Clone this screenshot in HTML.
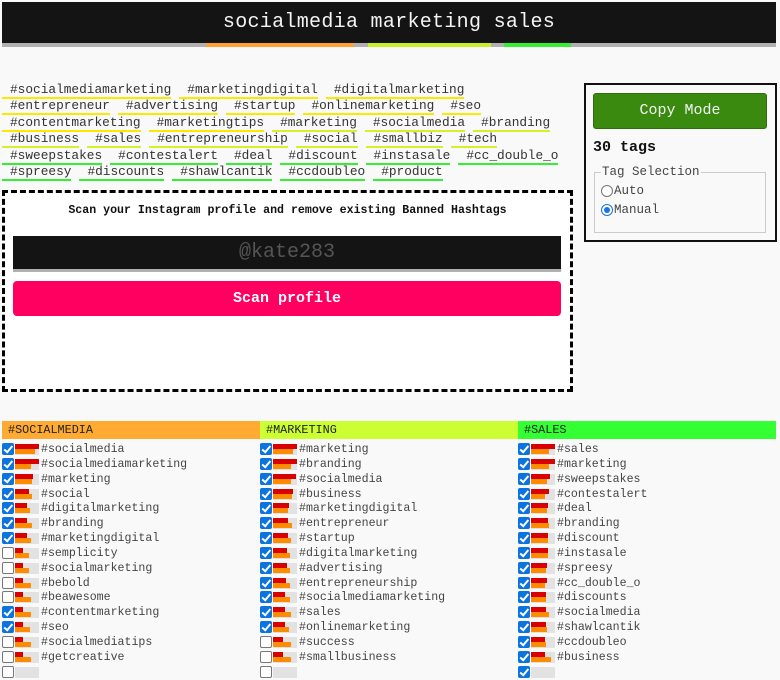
<!DOCTYPE html>
<html><head><meta charset="utf-8">
<style>
*{box-sizing:border-box;margin:0;padding:0}
body{width:780px;height:670px;overflow:hidden;background:#f9f9f9;font-family:"Liberation Mono",monospace;position:relative;color:#222}
.hdr{position:absolute;left:2px;top:2px;width:774px;height:45px;background:#141414;border-bottom:4px solid #b0b0b0}
.hdr .t{position:absolute;left:0;right:0;top:9px;text-align:center;color:#f4f4f4;font-size:20px;letter-spacing:0.3px}
.seg{position:absolute;top:41px;height:4px}
.tags{position:absolute;left:2px;top:82px;font-size:12.8px;color:#333}
.row{white-space:nowrap;height:16.4px}
.tg{display:inline-block;padding-left:8px;margin-right:8px;border-bottom:2px solid #ffe800;line-height:15px}
.y{border-color:#ffe800}.l{border-color:#d6f02a}.g{border-color:#33f033}
.scan{position:absolute;left:2px;top:190px;width:571px;height:202px;background:#fff;border:3px dashed #000}
.scan .h{position:absolute;top:11px;left:0;right:0;text-align:center;font-weight:bold;font-size:11.6px;color:#111}
.inp{position:absolute;left:8px;top:43px;width:548px;height:36px;background:#141414;border-bottom:3px solid #b0b0b0;text-align:center;color:#555;font-size:20px;line-height:33px}
.btn{position:absolute;left:8px;top:88px;width:548px;height:35px;background:#ff0060;border-radius:4px;color:#fff;font-weight:bold;text-align:center;font-size:15px;line-height:35px}
.side{position:absolute;left:584px;top:83px;width:193px;height:159px;border:2px solid #111;background:#f9f9f9}
.cp{position:absolute;left:7px;top:8px;width:174px;height:36px;background:#3a8a10;border:1px solid #2d6e0a;border-radius:3px;color:#f4f4f4;text-align:center;font-size:15px;line-height:33px}
.cnt{position:absolute;left:7px;top:54px;font-weight:bold;font-size:15px;color:#111}
fieldset{position:absolute;left:8px;top:80px;width:172px;height:68px;border:1px solid #ccc;padding:2px 6px 0}
legend{font-size:12.5px;color:#444;padding:0 1px}
.rd{font-size:12.5px;color:#444;height:19px;display:flex;align-items:center}
.rb{width:12px;height:12px;border-radius:50%;border:1px solid #777;background:#fff;margin-right:1px;display:inline-block;position:relative}
.rb.on{border-color:#1a73e8}
.rb.on:after{content:"";position:absolute;left:2px;top:2px;width:6px;height:6px;border-radius:50%;background:#1a73e8}
.col{position:absolute;top:421px;width:258px}
.ch{height:18px;font-size:11.8px;line-height:18px;padding-left:6px;color:#222;margin-bottom:3px}
.it{height:14.85px;position:relative;font-size:11.6px;line-height:16px;padding-left:39px;color:#444;white-space:nowrap}
.cb{position:absolute;left:0;top:1px;width:12px;height:12px;border-radius:2px}
.cb.on{background:#0b74de}
.cb.on:after{content:"";position:absolute;left:3.5px;top:1px;width:3px;height:6.5px;border:solid #fff;border-width:0 2px 2px 0;transform:rotate(40deg)}
.cb.off{background:#fff;border:1px solid #777}
.bar{position:absolute;left:13px;top:2px;width:24px;height:11px;background:#e2e2e2}
.bar i{position:absolute;left:0;top:0;height:5px;background:#d80000}
.bar b{position:absolute;left:0;top:5px;height:5px;background:#ff8c00}
</style></head><body>
<div class="hdr"><div class="t">socialmedia marketing sales</div>
<div class="seg" style="left:204px;width:148px;background:#ffa030"></div>
<div class="seg" style="left:366px;width:123px;background:#c8f02a"></div>
<div class="seg" style="left:502px;width:67px;background:#33ee33"></div>
</div>

<div class="tags">
<div class="row"><span class="tg y">#socialmediamarketing</span><span class="tg y">#marketingdigital</span><span class="tg y">#digitalmarketing</span></div>
<div class="row"><span class="tg y">#entrepreneur</span><span class="tg y">#advertising</span><span class="tg y">#startup</span><span class="tg y">#onlinemarketing</span><span class="tg y">#seo</span></div>
<div class="row"><span class="tg y">#contentmarketing</span><span class="tg y">#marketingtips</span><span class="tg l">#marketing</span><span class="tg l">#socialmedia</span><span class="tg l">#branding</span></div>
<div class="row"><span class="tg l">#business</span><span class="tg l">#sales</span><span class="tg l">#entrepreneurship</span><span class="tg l">#social</span><span class="tg l">#smallbiz</span><span class="tg l">#tech</span></div>
<div class="row"><span class="tg g">#sweepstakes</span><span class="tg g">#contestalert</span><span class="tg g">#deal</span><span class="tg g">#discount</span><span class="tg g">#instasale</span><span class="tg g">#cc_double_o</span></div>
<div class="row"><span class="tg g">#spreesy</span><span class="tg g">#discounts</span><span class="tg g">#shawlcantik</span><span class="tg g">#ccdoubleo</span><span class="tg g">#product</span></div>
</div>

<div class="scan">
<div class="h">Scan your Instagram profile and remove existing Banned Hashtags</div>
<div class="inp">@kate283</div>
<div class="btn">Scan profile</div>
</div>

<div class="side">
<div class="cp">Copy Mode</div>
<div class="cnt">30 tags</div>
<fieldset><legend>Tag Selection</legend>
<div class="rd"><span class="rb"></span>Auto</div>
<div class="rd"><span class="rb on"></span>Manual</div>
</fieldset>
</div>

<div class="col" style="left:2px"><div class="ch" style="background:#ffaa33">#SOCIALMEDIA</div>
<div class="it"><span class="cb on"></span><span class="bar"><i style="width:24px"></i><b style="width:20px"></b></span>#socialmedia</div>
<div class="it"><span class="cb on"></span><span class="bar"><i style="width:24px"></i><b style="width:16px"></b></span>#socialmediamarketing</div>
<div class="it"><span class="cb on"></span><span class="bar"><i style="width:18px"></i><b style="width:17px"></b></span>#marketing</div>
<div class="it"><span class="cb on"></span><span class="bar"><i style="width:14px"></i><b style="width:17px"></b></span>#social</div>
<div class="it"><span class="cb on"></span><span class="bar"><i style="width:12px"></i><b style="width:15px"></b></span>#digitalmarketing</div>
<div class="it"><span class="cb on"></span><span class="bar"><i style="width:12px"></i><b style="width:17px"></b></span>#branding</div>
<div class="it"><span class="cb on"></span><span class="bar"><i style="width:12px"></i><b style="width:16px"></b></span>#marketingdigital</div>
<div class="it"><span class="cb off"></span><span class="bar"><i style="width:8px"></i><b style="width:14px"></b></span>#semplicity</div>
<div class="it"><span class="cb off"></span><span class="bar"><i style="width:8px"></i><b style="width:14px"></b></span>#socialmarketing</div>
<div class="it"><span class="cb off"></span><span class="bar"><i style="width:8px"></i><b style="width:16px"></b></span>#bebold</div>
<div class="it"><span class="cb off"></span><span class="bar"><i style="width:8px"></i><b style="width:16px"></b></span>#beawesome</div>
<div class="it"><span class="cb on"></span><span class="bar"><i style="width:8px"></i><b style="width:16px"></b></span>#contentmarketing</div>
<div class="it"><span class="cb on"></span><span class="bar"><i style="width:8px"></i><b style="width:15px"></b></span>#seo</div>
<div class="it"><span class="cb off"></span><span class="bar"><i style="width:8px"></i><b style="width:16px"></b></span>#socialmediatips</div>
<div class="it"><span class="cb off"></span><span class="bar"><i style="width:8px"></i><b style="width:16px"></b></span>#getcreative</div>
<div class="it"><span class="cb off"></span><span class="bar"></span></div>
</div>

<div class="col" style="left:260px"><div class="ch" style="background:#ccff33">#MARKETING</div>
<div class="it"><span class="cb on"></span><span class="bar"><i style="width:24px"></i><b style="width:20px"></b></span>#marketing</div>
<div class="it"><span class="cb on"></span><span class="bar"><i style="width:24px"></i><b style="width:18px"></b></span>#branding</div>
<div class="it"><span class="cb on"></span><span class="bar"><i style="width:23px"></i><b style="width:18px"></b></span>#socialmedia</div>
<div class="it"><span class="cb on"></span><span class="bar"><i style="width:20px"></i><b style="width:19px"></b></span>#business</div>
<div class="it"><span class="cb on"></span><span class="bar"><i style="width:16px"></i><b style="width:15px"></b></span>#marketingdigital</div>
<div class="it"><span class="cb on"></span><span class="bar"><i style="width:15px"></i><b style="width:19px"></b></span>#entrepreneur</div>
<div class="it"><span class="cb on"></span><span class="bar"><i style="width:15px"></i><b style="width:18px"></b></span>#startup</div>
<div class="it"><span class="cb on"></span><span class="bar"><i style="width:14px"></i><b style="width:17px"></b></span>#digitalmarketing</div>
<div class="it"><span class="cb on"></span><span class="bar"><i style="width:14px"></i><b style="width:17px"></b></span>#advertising</div>
<div class="it"><span class="cb on"></span><span class="bar"><i style="width:13px"></i><b style="width:17px"></b></span>#entrepreneurship</div>
<div class="it"><span class="cb on"></span><span class="bar"><i style="width:12px"></i><b style="width:17px"></b></span>#socialmediamarketing</div>
<div class="it"><span class="cb on"></span><span class="bar"><i style="width:12px"></i><b style="width:18px"></b></span>#sales</div>
<div class="it"><span class="cb on"></span><span class="bar"><i style="width:12px"></i><b style="width:16px"></b></span>#onlinemarketing</div>
<div class="it"><span class="cb off"></span><span class="bar"><i style="width:10px"></i><b style="width:18px"></b></span>#success</div>
<div class="it"><span class="cb off"></span><span class="bar"><i style="width:10px"></i><b style="width:18px"></b></span>#smallbusiness</div>
<div class="it"><span class="cb off"></span><span class="bar"></span></div>
</div>

<div class="col" style="left:518px"><div class="ch" style="background:#33ff33">#SALES</div>
<div class="it"><span class="cb on"></span><span class="bar"><i style="width:24px"></i><b style="width:18px"></b></span>#sales</div>
<div class="it"><span class="cb on"></span><span class="bar"><i style="width:24px"></i><b style="width:18px"></b></span>#marketing</div>
<div class="it"><span class="cb on"></span><span class="bar"><i style="width:19px"></i><b style="width:16px"></b></span>#sweepstakes</div>
<div class="it"><span class="cb on"></span><span class="bar"><i style="width:18px"></i><b style="width:14px"></b></span>#contestalert</div>
<div class="it"><span class="cb on"></span><span class="bar"><i style="width:17px"></i><b style="width:16px"></b></span>#deal</div>
<div class="it"><span class="cb on"></span><span class="bar"><i style="width:17px"></i><b style="width:18px"></b></span>#branding</div>
<div class="it"><span class="cb on"></span><span class="bar"><i style="width:17px"></i><b style="width:17px"></b></span>#discount</div>
<div class="it"><span class="cb on"></span><span class="bar"><i style="width:17px"></i><b style="width:17px"></b></span>#instasale</div>
<div class="it"><span class="cb on"></span><span class="bar"><i style="width:16px"></i><b style="width:15px"></b></span>#spreesy</div>
<div class="it"><span class="cb on"></span><span class="bar"><i style="width:16px"></i><b style="width:14px"></b></span>#cc_double_o</div>
<div class="it"><span class="cb on"></span><span class="bar"><i style="width:15px"></i><b style="width:15px"></b></span>#discounts</div>
<div class="it"><span class="cb on"></span><span class="bar"><i style="width:15px"></i><b style="width:18px"></b></span>#socialmedia</div>
<div class="it"><span class="cb on"></span><span class="bar"><i style="width:15px"></i><b style="width:16px"></b></span>#shawlcantik</div>
<div class="it"><span class="cb on"></span><span class="bar"><i style="width:14px"></i><b style="width:15px"></b></span>#ccdoubleo</div>
<div class="it"><span class="cb on"></span><span class="bar"><i style="width:14px"></i><b style="width:20px"></b></span>#business</div>
<div class="it"><span class="cb on"></span><span class="bar"></span></div>
</div>
</body></html>
